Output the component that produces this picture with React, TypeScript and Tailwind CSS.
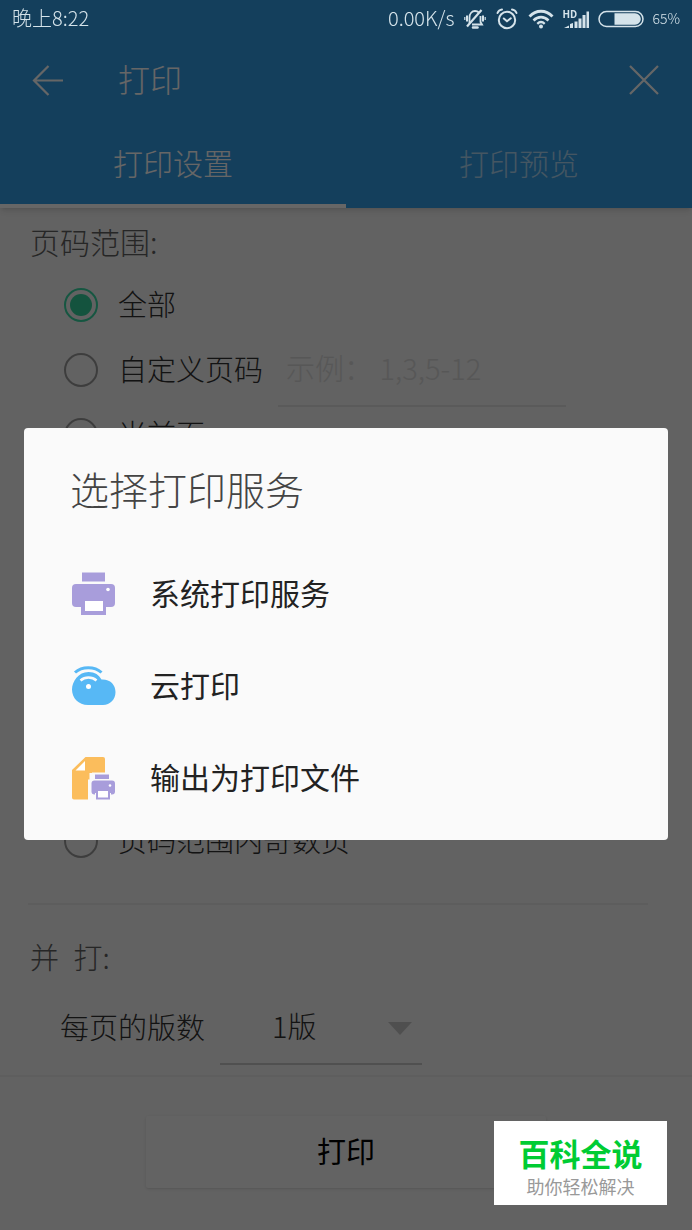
import type { ReactNode } from "react";

function MutedBell() {
  return (
    <svg width="22" height="22" viewBox="0 0 22 22" fill="none" stroke="currentColor" aria-hidden>
      <path d="M5.500 15V9.500C5.500 5.500 8 3 11 3c1.500 0 3 .6 4 1.600M16.500 8V14l1.500 2.500H8" strokeWidth="1.800" />
      <path d="M3 18.500L17.500 2" strokeWidth="2.200" />
      <path d="M9 19.500h4.500" strokeWidth="2.500" strokeLinecap="round" />
      <path d="M3 7.500v6M19 7.500v6" strokeWidth="2" />
      <path d="M.8 9v3M21.200 9v3" strokeWidth="1.200" />
    </svg>
  );
}

function AlarmClock() {
  return (
    <svg width="22" height="22" viewBox="0 0 22 22" fill="none" stroke="currentColor" strokeLinecap="round" aria-hidden>
      <circle cx="11" cy="12" r="8.200" strokeWidth="2" />
      <path d="M7.800 10.500l3.200 2.800 3.800-3" strokeWidth="2" />
      <path d="M1.500 5C2.300 3 4 1.700 6 1.500M20.500 5C19.700 3 18 1.700 16 1.500" strokeWidth="2" />
    </svg>
  );
}

function Wifi() {
  return (
    <svg width="26" height="20" viewBox="0 0 26 20" fill="none" stroke="currentColor" aria-hidden>
      <path d="M1.500 7.500C8 .5 18 .5 24.500 7.500" strokeWidth="2.800" />
      <path d="M5.500 11.500c4.500-4.500 10.500-4.500 15 0" strokeWidth="2.600" />
      <path d="M9.300 14.800c2.200-2 5.200-2 7.400 0" strokeWidth="2.400" />
      <circle cx="13" cy="17.500" r="2" fill="currentColor" stroke="none" />
    </svg>
  );
}

function Signal() {
  return (
    <span className="relative block h-5 w-7">
      <span className="absolute left-0 top-0 text-[10px] font-bold leading-[9px]">HD</span>
      <svg width="28" height="20" viewBox="0 0 28 20" fill="currentColor" aria-hidden>
        <path d="M2 19l5-2.500V19zM8 15l3-1v5H8zM12.500 12.500h3V19h-3zM16.500 9.500h3V19h-3zM20.500 6h3v13h-3zM24.500 2.500h2.500V19h-2.500z" />
      </svg>
    </span>
  );
}

function Battery() {
  return (
    <svg width="46" height="18" viewBox="0 0 46 18" fill="none" aria-hidden>
      <rect x="1" y="1.500" width="44" height="15" rx="7.500" stroke="currentColor" strokeWidth="1.500" />
      <path d="M16.500 3.200H37a5.800 5.800 0 0 1 0 11.600H16.500z" fill="currentColor" />
    </svg>
  );
}

function PrinterIcon() {
  return (
    <svg width="46" height="46" viewBox="0 0 46 46" aria-hidden>
      <g fill="#a89ddb">
        <rect x="12" y="1.500" width="23" height="9" />
        <rect x="2" y="13" width="43" height="23" rx="4" />
        <rect x="11" y="28" width="25" height="16" />
      </g>
      <path d="M10.500 36v8M36.500 36v8" stroke="#fafafa" />
      <rect x="15" y="30" width="18" height="10" fill="#fff" />
      <circle cx="38" cy="18.500" r="1.800" fill="#fff" />
    </svg>
  );
}

function CloudIcon() {
  return (
    <svg width="46" height="46" viewBox="0 0 46 46" fill="none" aria-hidden>
      <path
        d="M18 42C8.500 42 2 35 2 26.500c0-8 6.500-17.500 16.500-17.500 6.500 0 10.500 3 13 7.500 8.500-.5 14 5 14 12.500S40 42 33 42z"
        fill="#57b8f5"
      />
      <path d="M5 10c7-6.500 19.500-6.500 26.500 0" stroke="#fafafa" strokeWidth="6" />
      <path d="M5 9.500c7-6.500 19.500-6.500 26.500 0" stroke="#57b8f5" strokeWidth="3" />
      <path d="M10.500 17.500c4.500-4 11.500-4 16 0" stroke="#fafafa" strokeWidth="2.500" />
      <circle cx="18.500" cy="23.500" r="2.500" fill="#fff" />
    </svg>
  );
}

function FileIcon() {
  return (
    <svg width="46" height="46" viewBox="0 0 46 46" aria-hidden>
      <path d="M2 15L15.500 2H33q2 0 2 2v14H19.500v26.500H4q-2 0-2-2z" fill="#fbbd5c" />
      <path d="M5.500 15.500L15 6v9.500z" fill="#fff" />
      <path d="M22 17.500h18v7h7v16h-7v5H18V24.500h4z" fill="#fafafa" />
      <g fill="#a89ddb">
        <rect x="25" y="19.500" width="14" height="4.500" />
        <rect x="21.500" y="25.500" width="23.500" height="14" rx="3" />
        <rect x="26" y="35" width="14" height="9.500" />
      </g>
      <path d="M25.500 38v7M40.500 38v7" stroke="#fafafa" />
      <rect x="28" y="36" width="10" height="6.500" fill="#fff" />
      <circle cx="40" cy="30.500" r="1.300" fill="#fff" />
    </svg>
  );
}

const services = [
  { name: "系统打印服务", icon: <PrinterIcon /> },
  { name: "云打印", icon: <CloudIcon /> },
  { name: "输出为打印文件", icon: <FileIcon /> },
];

function RadioRow({
  id,
  group,
  label,
  checked,
  children,
}: {
  id: string;
  group: string;
  label: string;
  checked?: boolean;
  children?: ReactNode;
}) {
  return (
    <div className="flex h-[65px] items-center pl-16">
      <input
        id={id}
        type="radio"
        name={group}
        defaultChecked={checked}
        className="size-[34px] shrink-0 appearance-none rounded-full border-2 border-[#9a9a9a] bg-clip-content p-1 checked:border-[#38d8a4] checked:bg-[#34d09c]"
      />
      <label htmlFor={id} className="pb-1 pl-5 whitespace-nowrap">
        {label}
      </label>
      {children}
    </div>
  );
}

export default function App() {
  return (
    <div className="flex min-h-screen flex-col bg-[#f4f4f4] font-['Noto_Sans_CJK_SC',sans-serif] text-[29px] font-light leading-9 text-[#303030]">
      <header className="bg-[#349ee6] text-white shadow-md">
        {/* status bar stays bright above the dialog scrim */}
        <div className="relative z-20 flex h-[38px] items-center justify-between px-3 text-xl text-[#d5e3ea]">
          <span className="pb-0.5">晚上8:22</span>
          <div className="flex items-center gap-2">
            <div className="flex items-center gap-[10px] pr-0.5">
              <span className="pb-0.5">0.00K/s</span>
              <MutedBell />
              <AlarmClock />
            </div>
            <Wifi />
            <Signal />
            <Battery />
            <span className="pb-0.5 text-sm">65%</span>
          </div>
        </div>

        <div className="flex h-[84px] items-center px-8">
          <button type="button" aria-label="返回">
            <svg width="32" height="32" viewBox="0 0 32 32" fill="none" stroke="currentColor" strokeWidth="2.200">
              <path d="M31 16.500H2.500M16.500 2L2 16.500 16.500 31" />
            </svg>
          </button>
          <h1 className="flex-1 pb-1 pl-[54px] text-[32px]">打印</h1>
          <button type="button" aria-label="关闭">
            <svg width="32" height="32" viewBox="0 0 32 32" fill="none" stroke="currentColor" strokeWidth="2.200">
              <path d="M2 2l28 28M30 2L2 30" />
            </svg>
          </button>
        </div>

        <nav className="grid h-[86px] grid-cols-2 text-[30px]">
          <button type="button" className="border-b-4 border-white pb-0.5">
            打印设置
          </button>
          <button type="button" className="border-b-4 border-transparent pb-0.5 text-white/60">
            打印预览
          </button>
        </nav>
      </header>

      <main className="flex-1 pt-[15px]">
        <h2 className="pl-[30px] text-[30px] text-[#606060]">页码范围:</h2>
        <div className="mt-[13px]">
          <RadioRow id="all" group="range" label="全部" checked />
          <RadioRow id="custom" group="range" label="自定义页码">
            <input
              type="text"
              aria-label="自定义页码范围"
              placeholder="示例： 1,3,5-12"
              className="ml-[15px] h-[74px] w-72 shrink-0 border-b-2 border-[#e0e0e0] bg-transparent pb-1 pl-2 outline-none placeholder:text-[#dadada]"
            />
          </RadioRow>
          <RadioRow id="current" group="range" label="当前页" />
        </div>
        <div className="mt-[341px]">
          <RadioRow id="odd" group="subset" label="页码范围内奇数页" />
        </div>

        <hr className="mr-11 ml-7 mt-[30px] border-t-2 border-[#e9e9e9]" />

        <h2 className="mt-[33px] pl-[30px] text-[#606060]">并&ensp;打:</h2>
        <div className="mt-4 flex items-center pl-[60px]">
          <label htmlFor="per-page" className="pb-1">
            每页的版数
          </label>
          <div className="relative ml-[15px] w-[202px]">
            <select
              id="per-page"
              className="h-[75px] w-full appearance-none border-b-2 border-[#c8c8c8] bg-transparent pb-1 pl-[52px] outline-none"
            >
              <option>1版</option>
            </select>
            <svg className="pointer-events-none absolute right-[10px] top-8" width="24" height="13" viewBox="0 0 24 13" aria-hidden>
              <path d="M0 0h24L12 13z" fill="#c6c6c6" />
            </svg>
          </div>
        </div>
      </main>

      <footer className="mt-[10px] border-t-2 border-[#eaeaea] px-[146px] pt-[39px] pb-[42px]">
        <button type="button" className="h-[72px] w-full rounded-xs bg-[#f8f8f8] pb-1 font-normal text-black shadow">
          打印
        </button>
      </footer>

      <div className="fixed inset-0 z-10 flex items-center bg-black/60 px-6 pt-[38px]">
        <div role="dialog" aria-labelledby="dialog-title" className="w-full rounded bg-[#fafafa] pt-[30px] pb-4">
          <h2 id="dialog-title" className="mb-[30px] px-[46px] text-[39px] leading-[60px] text-[#444]">
            选择打印服务
          </h2>
          <ul>
            {services.map((s) => (
              <li key={s.name}>
                <button
                  type="button"
                  className="flex h-[92px] w-full items-center gap-[34px] px-[46px] text-[30px] font-normal text-[#222]"
                >
                  {s.icon}
                  <span className="pb-1">{s.name}</span>
                </button>
              </li>
            ))}
          </ul>
        </div>
      </div>

      <aside className="fixed right-[25px] bottom-[25px] z-30 flex h-[84px] w-[173px] flex-col items-center bg-white pt-3">
        <strong className="text-[31px] font-bold leading-10 text-[#0c3]">百科全说</strong>
        <span className="text-lg font-normal leading-[26px] text-[#999]">助你轻松解决</span>
      </aside>
    </div>
  );
}
